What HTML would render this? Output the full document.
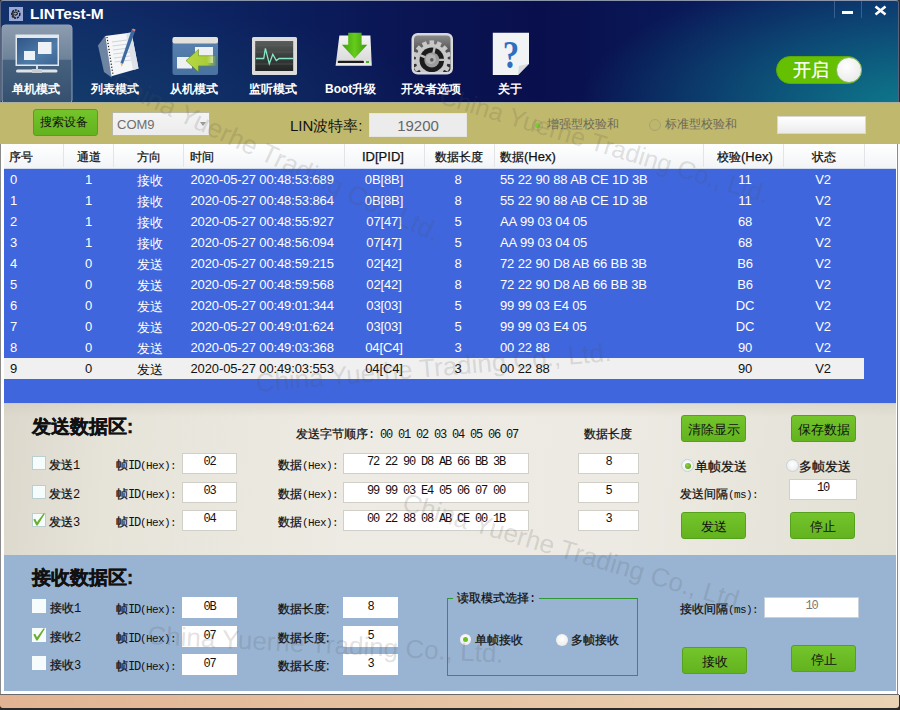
<!DOCTYPE html>
<html><head><meta charset="utf-8">
<style>
*{box-sizing:border-box;margin:0;padding:0}
html,body{width:900px;height:710px;overflow:hidden;background:#2a2a2a;font-family:"Liberation Sans",sans-serif}
.a{position:absolute;white-space:nowrap}
.c{width:80px;text-align:center}
#win{position:absolute;left:0;top:0;width:900px;height:710px;overflow:hidden}
#frame{position:absolute;left:0;top:140px;width:898px;height:555px;background:#fff;border-left:1px solid #8a8a8a;border-right:1px solid #8a8a8a}
#rw{position:absolute;left:898px;top:140px;width:2px;height:555px;background:#fafafa}
#tb{position:absolute;left:0;top:0;width:899px;height:102px;border:1px solid #56627c;border-top-color:#8a94aa;border-bottom:none;border-radius:3px 3px 0 0;
 background:radial-gradient(ellipse 320px 130px at 900px 102px,rgba(14,122,140,0.95),rgba(14,122,140,0) 100%),radial-gradient(ellipse 380px 100px at 60px 102px,rgba(22,72,110,0.55),rgba(22,72,110,0) 100%),linear-gradient(90deg,#12306a 0%,#0d2462 22%,#0a1554 45%,#090f4c 60%,#0a1a5a 78%,#0c2a68 100%);overflow:hidden}
.lbl{color:#fff;font-weight:bold;font-size:12px;top:80px}
#olive{position:absolute;left:0;top:102px;width:900px;height:42px;background:#c0b86c;box-shadow:inset 0 1px #aab0a0}
#hdr{position:absolute;left:4px;top:144px;width:892px;height:25px;background:linear-gradient(#fff,#f3f4f6);border-bottom:1px solid #d0daee}
#hdr .a{font-size:12px;color:#111;top:5px;-webkit-text-stroke:0.25px #111}
.sep{position:absolute;top:0;width:1px;height:23px;background:#e2e4e8}
#body{position:absolute;left:4px;top:169px;width:892px;height:234px;background:#3f66dc}
.row{position:absolute;left:0;width:860px;height:21px;color:#fff;font-size:13px;letter-spacing:-0.12px}
.row .a{top:3px}
.row.sel{background:#f0f0f0;color:#111}
#send{position:absolute;left:4px;top:403px;width:892px;height:152px;box-shadow:inset 0 1px #c4cce0;background:linear-gradient(rgba(200,195,180,0.35),rgba(200,195,180,0) 14px),linear-gradient(95deg,#dcd8cc 0%,#e6e3d9 12%,#eeebe4 40%,#eceae2 70%,#e2dfd4 100%)}
#recv{position:absolute;left:4px;top:555px;width:892px;height:136px;background:#99b4d3}
#foot{position:absolute;left:0;top:694px;width:899px;height:14px;background:linear-gradient(90deg,#e2b493,#e9d3b4);border-top:1px solid #6a6a6a;border-radius:0 0 3px 3px}
.btn{position:absolute;border:1px solid #55a01c;border-radius:3px;background:linear-gradient(#74c42c,#63b31f);color:#111;font-size:12px;text-align:center}
.tx{position:absolute;background:#fff;border:1px solid #d0d0c8;font-family:"Liberation Mono",monospace;font-size:12px;letter-spacing:-1.2px;text-align:center;color:#111;padding-top:1px}
.mono{font-family:"Liberation Mono",monospace;font-size:12px;letter-spacing:-1.2px;color:#111;-webkit-text-stroke:0}
.ms{font-family:"Liberation Mono",monospace;font-size:11px;letter-spacing:-0.6px;color:#111;-webkit-text-stroke:0}
.cb{position:absolute;width:14px;height:14px;background:#f6fcfc;border:1px solid #bccfd0}
.k{font-size:12px;color:#111;-webkit-text-stroke:0.25px #111}
.rad{position:absolute;width:13px;height:13px;border-radius:50%;background:radial-gradient(circle at 50% 40%,#fff,#e6e6e6);border:1px solid #c6c6c6}
</style></head><body>
<div id="win">
 <div id="frame"></div><div id="rw"></div>
 <div id="tb">
  <svg class="a" style="left:-1px;top:-1px" width="900" height="102" viewBox="0 0 900 102">
   <defs>
    <linearGradient id="selg" x1="0" y1="0" x2="0" y2="1">
     <stop offset="0" stop-color="#8e9db0"/><stop offset="0.44" stop-color="#6d8299"/><stop offset="0.45" stop-color="#46627f"/><stop offset="1" stop-color="#34506e"/>
    </linearGradient>
    <linearGradient id="scr" x1="0" y1="0" x2="1" y2="1">
     <stop offset="0" stop-color="#2f5688"/><stop offset="0.6" stop-color="#4f7ba8"/><stop offset="1" stop-color="#3a6494"/>
    </linearGradient>
    <linearGradient id="win2" x1="0" y1="0" x2="0" y2="1">
     <stop offset="0" stop-color="#5a82b0"/><stop offset="1" stop-color="#4a72a0"/>
    </linearGradient>
    <linearGradient id="arr" x1="0" y1="0" x2="1" y2="0">
     <stop offset="0" stop-color="#b8d840"/><stop offset="0.7" stop-color="#a8cc3a"/><stop offset="1" stop-color="#a8cc3a" stop-opacity="0.2"/>
    </linearGradient>
    <linearGradient id="scr2" x1="0" y1="0" x2="0" y2="1">
     <stop offset="0" stop-color="#5a5f5c"/><stop offset="0.5" stop-color="#3a3e3c"/><stop offset="1" stop-color="#222524"/>
    </linearGradient>
    <linearGradient id="gearbg" x1="0" y1="0" x2="0" y2="1">
     <stop offset="0" stop-color="#8a8a8a"/><stop offset="0.5" stop-color="#4a4a4a"/><stop offset="1" stop-color="#262626"/>
    </linearGradient>
    <linearGradient id="drv" x1="0" y1="0" x2="0" y2="1">
     <stop offset="0" stop-color="#f4f4f4"/><stop offset="0.8" stop-color="#dcdcdc"/><stop offset="1" stop-color="#f0f0f0"/>
    </linearGradient>
    <linearGradient id="grn" x1="0" y1="0" x2="1" y2="0">
     <stop offset="0" stop-color="#3ea010"/><stop offset="0.5" stop-color="#66cc1a"/><stop offset="1" stop-color="#3c9a0e"/>
    </linearGradient>
   </defs>
   <!-- selected tab -->
   <rect x="2" y="25" width="70" height="78" rx="3" fill="url(#selg)" stroke="#8fa2b8" stroke-width="1"/>
   <!-- monitor icon -->
   <rect x="15.5" y="34.5" width="43.5" height="31.5" fill="#e2e8ee" />
   <rect x="17" y="38" width="40.5" height="26.5" fill="url(#scr)"/>
   <rect x="24" y="51" width="11" height="9" fill="#eef2f6"/>
   <rect x="38" y="42" width="13.5" height="12" fill="#eef2f6"/>
   <rect x="36" y="66" width="2" height="4" fill="#d8dde2"/>
   <rect x="16" y="69.5" width="41.5" height="3" rx="1.5" fill="#dfe4e8"/>
   <rect x="32" y="69" width="10" height="4" fill="#c8ced4"/>
   <!-- notepad icon -->
   <polygon points="98,45.5 105,36 112,77.7 104,72" fill="#7e93ad" opacity="0.85"/>
   <polygon points="105.2,35.9 131.5,32.4 138.5,68.4 111.4,76.2" fill="#f4f6f8"/>
   <polygon points="131.5,32.4 138.5,68.4 133,70 126,33.2" fill="#dde2e8"/>
   <g stroke="#222" stroke-width="1.2" stroke-dasharray="1.2 1.8">
    <line x1="107" y1="37" x2="113" y2="75"/>
   </g>
   <g stroke="#c4ccd6" stroke-width="0.8">
    <line x1="112" y1="42" x2="127" y2="40"/><line x1="112.5" y1="46" x2="128" y2="44"/><line x1="113" y1="50" x2="129" y2="48"/>
    <line x1="113.5" y1="54" x2="130" y2="52"/><line x1="114" y1="58" x2="130" y2="56"/><line x1="114.5" y1="62" x2="131" y2="60"/>
   </g>
   <polygon points="131.5,30 135,31.5 123,64 120.5,63" fill="#3c6aa0"/>
   <polygon points="120.5,63 123,64 121.5,67" fill="#e8c070"/>
   <polygon points="131.5,30 135,31.5 135.5,29.5 133,28.5" fill="#d88080"/>
   <!-- slave icon -->
   <rect x="172.5" y="37" width="45.5" height="38" rx="2.5" fill="url(#win2)"/>
   <rect x="172.5" y="37" width="45.5" height="6.5" rx="2" fill="#e4e0da"/>
   <rect x="195" y="47" width="18" height="16" fill="#eef1f4"/>
   <rect x="177" y="57" width="15" height="11.5" fill="#eef1f4"/>
   <polygon points="186,60.6 198.5,49.4 198.5,55.7 216,55.7 216,65.9 198.5,65.9 198.5,72" fill="url(#arr)" stroke="#5c8a20" stroke-width="0.6"/>
   <!-- listen icon -->
   <rect x="252" y="37" width="45" height="38" rx="1.5" fill="#dcdcdc"/>
   <rect x="255.2" y="41" width="38" height="30" fill="url(#scr2)"/>
   <g stroke="#5c625e" stroke-width="0.6"><line x1="255" y1="45.5" x2="293" y2="45.5"/><line x1="255" y1="52" x2="293" y2="52"/><line x1="255" y1="64" x2="293" y2="64"/></g>
   <polyline points="255.9,58.5 263.7,58.5 265.4,48.3 269.3,63.8 272.8,54.3 276.3,60.6 279.2,58.5 293.2,58.5" fill="none" stroke="#86e8c8" stroke-width="1.3"/>
   <!-- boot icon -->
   <polygon points="339.4,35.6 370.4,35.6 371.8,65.8 335.6,65.8" fill="url(#drv)"/>
   <rect x="337.7" y="60.7" width="26.3" height="2.4" rx="1.2" fill="#1a1a1a"/>
   <rect x="366" y="61" width="3" height="2" fill="#4ab020"/>
   <polygon points="348.2,32.7 361.6,32.7 361.6,44.7 367.3,44.7 354.6,58.5 341.9,44.7 348.2,44.7" fill="url(#grn)"/>
   <!-- gear icon -->
   <rect x="411.5" y="33" width="41.5" height="41.5" rx="6" fill="#d6d8dc"/>
   <rect x="414" y="35.5" width="36.5" height="36.5" rx="4" fill="url(#gearbg)"/>
   <clipPath id="gclip"><rect x="414" y="35.5" width="36.5" height="36.5" rx="4"/></clipPath>
   <g clip-path="url(#gclip)"><g transform="translate(431.8,59.9)">
    <circle r="16" fill="#c8c8c8"/>
    <g fill="#c8c8c8"><rect x="-2.3" y="-19.5" width="4.6" height="6" transform="rotate(0)"/><rect x="-2.3" y="-19.5" width="4.6" height="6" transform="rotate(24)"/><rect x="-2.3" y="-19.5" width="4.6" height="6" transform="rotate(48)"/><rect x="-2.3" y="-19.5" width="4.6" height="6" transform="rotate(72)"/><rect x="-2.3" y="-19.5" width="4.6" height="6" transform="rotate(96)"/><rect x="-2.3" y="-19.5" width="4.6" height="6" transform="rotate(120)"/><rect x="-2.3" y="-19.5" width="4.6" height="6" transform="rotate(144)"/><rect x="-2.3" y="-19.5" width="4.6" height="6" transform="rotate(168)"/><rect x="-2.3" y="-19.5" width="4.6" height="6" transform="rotate(192)"/><rect x="-2.3" y="-19.5" width="4.6" height="6" transform="rotate(216)"/><rect x="-2.3" y="-19.5" width="4.6" height="6" transform="rotate(240)"/><rect x="-2.3" y="-19.5" width="4.6" height="6" transform="rotate(264)"/><rect x="-2.3" y="-19.5" width="4.6" height="6" transform="rotate(288)"/><rect x="-2.3" y="-19.5" width="4.6" height="6" transform="rotate(312)"/><rect x="-2.3" y="-19.5" width="4.6" height="6" transform="rotate(336)"/></g>
    <circle r="12.3" fill="#1c1c1c"/>
    <g stroke="#bcbcbc" stroke-width="2.4"><line x1="0" y1="0" x2="3" y2="-13"/><line x1="0" y1="0" x2="-12.5" y2="-5"/><line x1="0" y1="0" x2="12.5" y2="0"/></g>
    <circle r="7.5" fill="#9c9c9c"/>
    <circle cx="-1" cy="-1" r="5" fill="#b4b4b4"/>
    <circle r="1.8" fill="#5a5a5a"/>
   </g></g>
   <!-- about icon -->
   <polygon points="492.8,32.8 529,32.8 529,63.8 518,75 492.8,75" fill="#f2f3f5"/>
   <polygon points="529,63.8 518,75 519,66" fill="#d8dadc"/>
   <text x="511" y="68" font-family="Liberation Serif" font-size="40" font-weight="bold" fill="#2f6fc0" text-anchor="middle" transform="translate(511,0) scale(0.82,1) translate(-511,0)">?</text>
  </svg>
  <svg class="a" style="left:8px;top:6px" width="14" height="14" viewBox="0 0 15 15"><rect width="15" height="15" fill="#98a8d8"/><circle cx="7.3" cy="7.6" r="4.3" fill="none" stroke="#1a1a22" stroke-width="1.6" stroke-dasharray="2.2 0.9"/><path d="M5.2 6.2q2-1.8 3.6 0q0.8 1.6-1.2 2.4q-1.4 0.4-1.6-0.8" fill="none" stroke="#1a1a22" stroke-width="1.1"/><path d="M4 5L4.5 10.5L7 11.8" fill="none" stroke="#333" stroke-width="1.8"/></svg>
  
  <div class="a" style="left:29px;top:4px;color:#fff;font-weight:bold;font-size:15.5px">LINTest-M</div>
  <div class="a" style="left:833px;top:0px;width:1px;height:17px;background:#3a5f8c"></div>
  <div class="a" style="left:860px;top:0px;width:1px;height:17px;background:#3a5f8c"></div>
  <div class="a" style="left:841px;top:10px;width:11px;height:3px;background:#fff"></div>
  <svg class="a" style="left:873px;top:4px" width="13" height="11"><path d="M1.5 1.5L11.5 9.5M11.5 1.5L1.5 9.5" stroke="#fff" stroke-width="2.6"/></svg>
  <div class="a lbl" style="left:11px">单机模式</div>
  <div class="a lbl" style="left:90px">列表模式</div>
  <div class="a lbl" style="left:169px">从机模式</div>
  <div class="a lbl" style="left:248px">监听模式</div>
  <div class="a lbl" style="left:324px">Boot升级</div>
  <div class="a lbl" style="left:400px">开发者选项</div>
  <div class="a lbl" style="left:497px">关于</div>
  <div class="a" style="left:775px;top:55px;width:86px;height:28px;border-radius:14px;background:#64c000;border:1px solid #5aa80a"></div>
  <div class="a" style="left:792px;top:57px;color:#fff;font-size:18px;-webkit-text-stroke:0.3px #fff">开启</div>
  <div class="a" style="left:835px;top:56px;width:26px;height:26px;border-radius:13px;background:radial-gradient(circle at 40% 35%,#fff,#e4e4e4);border:1px solid #8ab868"></div>
 </div>
 <div id="olive">
  <div class="btn" style="left:33px;top:7px;width:65px;height:27px;line-height:25px;font-size:12px;text-indent:-4px">搜索设备</div>
  <div class="a" style="left:112px;top:10px;width:98px;height:24px;background:linear-gradient(#f4f4f4,#ececec);border:1px solid #b8b8a4;color:#6e6e6e;font-size:13px;padding:4px 0 0 4px">COM9</div>
  <div class="a" style="left:200px;top:20px;width:0;height:0;border-left:3px solid transparent;border-right:3px solid transparent;border-top:4px solid #999"></div>
  <div class="a" style="left:290px;top:15px;font-size:15px;color:#111">LIN波特率:</div>
  <div class="a" style="left:369px;top:11px;width:98px;height:24px;background:#ececec;border:1px solid #e4e4e0;color:#666;font-size:15px;text-align:center;padding-top:3px">19200</div>
  <div class="rad" style="left:532px;top:18px;width:11px;height:11px;background:#bdb66e;border-color:#aca56a"></div>
  <div class="a" style="left:535px;top:21px;width:5px;height:5px;border-radius:50%;background:#7ccc2a"></div>
  <div class="a" style="left:547px;top:14px;font-size:12px;color:#6a6a5a">增强型校验和</div>
  <div class="rad" style="left:649px;top:17px;width:12px;height:12px;background:#bdb66e;border-color:#aaa46c"></div>
  <div class="a" style="left:665px;top:14px;font-size:12px;color:#6a6a5a">标准型校验和</div>
  <div class="a" style="left:777px;top:14px;width:89px;height:18px;background:linear-gradient(#fff,#ebebeb);border:1px solid #d8d8d0"></div>
 </div>
 <div id="hdr">
  <div class="sep" style="left:59px"></div>
  <div class="sep" style="left:109px"></div>
  <div class="sep" style="left:179px"></div>
  <div class="sep" style="left:340px"></div>
  <div class="sep" style="left:420px"></div>
  <div class="sep" style="left:490px"></div>
  <div class="sep" style="left:699px"></div>
  <div class="sep" style="left:779px"></div>
  <div class="sep" style="left:860px"></div>
  <div class="a" style="left:5px">序号</div>
  <div class="a" style="left:73px">通道</div>
  <div class="a" style="left:133px">方向</div>
  <div class="a" style="left:186px">时间</div>
  <div class="a" style="left:358px;font-size:13px">ID[PID]</div>
  <div class="a" style="left:431px">数据长度</div>
  <div class="a" style="left:496px">数据<span style="font-size:13px">(Hex)</span></div>
  <div class="a" style="left:713px">校验<span style="font-size:13px">(Hex)</span></div>
  <div class="a" style="left:808px">状态</div>
 </div>
 <div id="body">
  <div class="row" style="top:0px"><span class="a" style="left:6px">0</span><span class="a c" style="left:44.5px">1</span><span class="a" style="left:133px">接收</span><span class="a" style="left:186.5px">2020-05-27 00:48:53:689</span><span class="a c" style="left:340px">0B[8B]</span><span class="a c" style="left:414px">8</span><span class="a" style="left:496px">55 22 90 88 AB CE 1D 3B</span><span class="a c" style="left:701px">11</span><span class="a c" style="left:779px">V2</span></div>
  <div class="row" style="top:21px"><span class="a" style="left:6px">1</span><span class="a c" style="left:44.5px">1</span><span class="a" style="left:133px">接收</span><span class="a" style="left:186.5px">2020-05-27 00:48:53:864</span><span class="a c" style="left:340px">0B[8B]</span><span class="a c" style="left:414px">8</span><span class="a" style="left:496px">55 22 90 88 AB CE 1D 3B</span><span class="a c" style="left:701px">11</span><span class="a c" style="left:779px">V2</span></div>
  <div class="row" style="top:42px"><span class="a" style="left:6px">2</span><span class="a c" style="left:44.5px">1</span><span class="a" style="left:133px">接收</span><span class="a" style="left:186.5px">2020-05-27 00:48:55:927</span><span class="a c" style="left:340px">07[47]</span><span class="a c" style="left:414px">5</span><span class="a" style="left:496px">AA 99 03 04 05</span><span class="a c" style="left:701px">68</span><span class="a c" style="left:779px">V2</span></div>
  <div class="row" style="top:63px"><span class="a" style="left:6px">3</span><span class="a c" style="left:44.5px">1</span><span class="a" style="left:133px">接收</span><span class="a" style="left:186.5px">2020-05-27 00:48:56:094</span><span class="a c" style="left:340px">07[47]</span><span class="a c" style="left:414px">5</span><span class="a" style="left:496px">AA 99 03 04 05</span><span class="a c" style="left:701px">68</span><span class="a c" style="left:779px">V2</span></div>
  <div class="row" style="top:84px"><span class="a" style="left:6px">4</span><span class="a c" style="left:44.5px">0</span><span class="a" style="left:133px">发送</span><span class="a" style="left:186.5px">2020-05-27 00:48:59:215</span><span class="a c" style="left:340px">02[42]</span><span class="a c" style="left:414px">8</span><span class="a" style="left:496px">72 22 90 D8 AB 66 BB 3B</span><span class="a c" style="left:701px">B6</span><span class="a c" style="left:779px">V2</span></div>
  <div class="row" style="top:105px"><span class="a" style="left:6px">5</span><span class="a c" style="left:44.5px">0</span><span class="a" style="left:133px">发送</span><span class="a" style="left:186.5px">2020-05-27 00:48:59:568</span><span class="a c" style="left:340px">02[42]</span><span class="a c" style="left:414px">8</span><span class="a" style="left:496px">72 22 90 D8 AB 66 BB 3B</span><span class="a c" style="left:701px">B6</span><span class="a c" style="left:779px">V2</span></div>
  <div class="row" style="top:126px"><span class="a" style="left:6px">6</span><span class="a c" style="left:44.5px">0</span><span class="a" style="left:133px">发送</span><span class="a" style="left:186.5px">2020-05-27 00:49:01:344</span><span class="a c" style="left:340px">03[03]</span><span class="a c" style="left:414px">5</span><span class="a" style="left:496px">99 99 03 E4 05</span><span class="a c" style="left:701px">DC</span><span class="a c" style="left:779px">V2</span></div>
  <div class="row" style="top:147px"><span class="a" style="left:6px">7</span><span class="a c" style="left:44.5px">0</span><span class="a" style="left:133px">发送</span><span class="a" style="left:186.5px">2020-05-27 00:49:01:624</span><span class="a c" style="left:340px">03[03]</span><span class="a c" style="left:414px">5</span><span class="a" style="left:496px">99 99 03 E4 05</span><span class="a c" style="left:701px">DC</span><span class="a c" style="left:779px">V2</span></div>
  <div class="row" style="top:168px"><span class="a" style="left:6px">8</span><span class="a c" style="left:44.5px">0</span><span class="a" style="left:133px">发送</span><span class="a" style="left:186.5px">2020-05-27 00:49:03:368</span><span class="a c" style="left:340px">04[C4]</span><span class="a c" style="left:414px">3</span><span class="a" style="left:496px">00 22 88</span><span class="a c" style="left:701px">90</span><span class="a c" style="left:779px">V2</span></div>
  <div class="row sel" style="top:189px"><span class="a" style="left:6px">9</span><span class="a c" style="left:44.5px">0</span><span class="a" style="left:133px">发送</span><span class="a" style="left:186.5px">2020-05-27 00:49:03:553</span><span class="a c" style="left:340px">04[C4]</span><span class="a c" style="left:414px">3</span><span class="a" style="left:496px">00 22 88</span><span class="a c" style="left:701px">90</span><span class="a c" style="left:779px">V2</span></div> </div>
 <div id="send">
  <div class="a" style="left:28px;top:11px;font-size:18.5px;font-weight:bold;color:#111;-webkit-text-stroke:0.4px #111">发送数据区:</div>
  <div class="a k" style="left:292px;top:23px">发送字节顺序<span class="mono">: 00 01 02 03 04 05 06 07</span></div>
  <div class="a k" style="left:580px;top:23px">数据长度</div>
  <div class="cb" style="left:28px;top:53px"></div>
  <div class="a k" style="left:45px;top:54px">发送<span class="mono">1</span></div>
  <div class="a k" style="left:112px;top:54px">帧<span class="mono">ID</span><span class="ms">(Hex):</span></div>
  <div class="tx" style="left:178px;top:50px;width:55px;height:21px">02</div>
  <div class="a k" style="left:274px;top:54px">数据<span class="ms">(Hex):</span></div>
  <div class="tx" style="left:339px;top:50px;width:186px;height:21px">72 22 90 D8 AB 66 BB 3B</div>
  <div class="tx" style="left:574px;top:50px;width:61px;height:21px">8</div>
  <div class="cb" style="left:28px;top:82px"></div>
  <div class="a k" style="left:45px;top:83px">发送<span class="mono">2</span></div>
  <div class="a k" style="left:112px;top:83px">帧<span class="mono">ID</span><span class="ms">(Hex):</span></div>
  <div class="tx" style="left:178px;top:79px;width:55px;height:21px">03</div>
  <div class="a k" style="left:274px;top:83px">数据<span class="ms">(Hex):</span></div>
  <div class="tx" style="left:339px;top:79px;width:186px;height:21px">99 99 03 E4 05 06 07 00</div>
  <div class="tx" style="left:574px;top:79px;width:61px;height:21px">5</div>
  <div class="cb" style="left:28px;top:110px"></div>
  <svg class="a" style="left:28px;top:110px" width="14" height="14" viewBox="0 0 14 14"><path d="M1.3 6.6L3.2 5.8L5 9.2L11.6 0.3L12.9 0.8L5.6 12.4L4.3 12.4Z" fill="#6aae2c"/></svg>
  <div class="a k" style="left:45px;top:111px">发送<span class="mono">3</span></div>
  <div class="a k" style="left:112px;top:111px">帧<span class="mono">ID</span><span class="ms">(Hex):</span></div>
  <div class="tx" style="left:178px;top:107px;width:55px;height:21px">04</div>
  <div class="a k" style="left:274px;top:111px">数据<span class="ms">(Hex):</span></div>
  <div class="tx" style="left:339px;top:107px;width:186px;height:21px">00 22 88 08 AB CE 00 1B</div>
  <div class="tx" style="left:574px;top:107px;width:61px;height:21px">3</div>
  <div class="btn" style="left:677px;top:12px;width:65px;height:27px;line-height:28px;font-size:13px">清除显示</div>
  <div class="btn" style="left:787px;top:12px;width:65px;height:27px;line-height:28px;font-size:13px">保存数据</div>
  <div class="rad" style="left:677px;top:56px;border-color:#c4d4dc"></div>
  <div class="a" style="left:681px;top:60px;width:6px;height:6px;border-radius:50%;background:radial-gradient(circle at 40% 35%,#8fd040,#4e9a10)"></div>
  <div class="a k" style="left:691px;top:55px;font-size:13px">单帧发送</div>
  <div class="rad" style="left:782px;top:56px;border-color:#c4d4dc"></div>
  <div class="a k" style="left:795px;top:55px;font-size:13px">多帧发送</div>
  <div class="a k" style="left:676px;top:83px">发送间隔<span class="ms">(ms):</span></div>
  <div class="tx" style="left:785px;top:76px;width:68px;height:21px">10</div>
  <div class="btn" style="left:677px;top:109px;width:65px;height:27px;line-height:28px;font-size:13px">发送</div>
  <div class="btn" style="left:786px;top:109px;width:65px;height:27px;line-height:28px;font-size:13px">停止</div>
 </div>
 <div id="recv">
  <div class="a" style="left:28px;top:10px;font-size:18.5px;font-weight:bold;color:#111;-webkit-text-stroke:0.4px #111">接收数据区:</div>
  <div class="cb" style="left:28px;top:44px;border:none"></div>
  <div class="a k" style="left:46px;top:45px">接收<span class="mono">1</span></div>
  <div class="a k" style="left:112px;top:46px">帧<span class="mono">ID</span><span class="ms">(Hex):</span></div>
  <div class="tx" style="left:178px;top:42px;width:55px;height:21px;border:none;padding-top:3px">0B</div>
  <div class="a k" style="left:274px;top:46px">数据长度:</div>
  <div class="tx" style="left:339px;top:42px;width:55px;height:21px;border:none;padding-top:3px">8</div>
  <div class="cb" style="left:28px;top:73px;border:none"></div>
  <svg class="a" style="left:28px;top:73px" width="14" height="14" viewBox="0 0 14 14"><path d="M1.3 6.6L3.2 5.8L5 9.2L11.6 0.3L12.9 0.8L5.6 12.4L4.3 12.4Z" fill="#6aae2c"/></svg>
  <div class="a k" style="left:46px;top:74px">接收<span class="mono">2</span></div>
  <div class="a k" style="left:112px;top:75px">帧<span class="mono">ID</span><span class="ms">(Hex):</span></div>
  <div class="tx" style="left:178px;top:71px;width:55px;height:21px;border:none;padding-top:3px">07</div>
  <div class="a k" style="left:274px;top:75px">数据长度:</div>
  <div class="tx" style="left:339px;top:71px;width:55px;height:21px;border:none;padding-top:3px">5</div>
  <div class="cb" style="left:28px;top:101px;border:none"></div>
  <div class="a k" style="left:46px;top:102px">接收<span class="mono">3</span></div>
  <div class="a k" style="left:112px;top:103px">帧<span class="mono">ID</span><span class="ms">(Hex):</span></div>
  <div class="tx" style="left:178px;top:99px;width:55px;height:21px;border:none;padding-top:3px">07</div>
  <div class="a k" style="left:274px;top:103px">数据长度:</div>
  <div class="tx" style="left:339px;top:99px;width:55px;height:21px;border:none;padding-top:3px">3</div>
  <div class="a" style="left:443px;top:43px;width:191px;height:78px;border:1px solid #2f9a34"></div>
  <div class="a k" style="left:449px;top:35px;background:#99b4d3;padding:0 4px">读取模式选择<span class="mono">:</span></div>
  <div class="rad" style="left:456px;top:79px;width:11px;height:11px;border:none"></div>
  <div class="a" style="left:459px;top:82px;width:5px;height:5px;border-radius:50%;background:#6cbf22"></div>
  <div class="a k" style="left:471px;top:77px">单帧接收</div>
  <div class="rad" style="left:552px;top:79px;width:12px;height:12px;border:none"></div>
  <div class="a k" style="left:567px;top:77px">多帧接收</div>
  <div class="a k" style="left:676px;top:46px">接收间隔<span class="ms">(ms):</span></div>
  <div class="tx" style="left:760px;top:42px;width:95px;height:21px;border-color:#c8d0d8;color:#777">10</div>
  <div class="btn" style="left:678px;top:92px;width:65px;height:27px;line-height:28px;font-size:13px">接收</div>
  <div class="btn" style="left:787px;top:90px;width:65px;height:27px;line-height:28px;font-size:13px">停止</div>
 </div>
 <div id="foot"></div>
 <svg class="a" style="left:0;top:0" width="900" height="710" viewBox="0 0 900 710">
  <g font-family="Liberation Sans" fill="#505050" fill-opacity="0.18">
   <text font-size="26.3" transform="translate(109,88) rotate(25.3)">China Yuerhe Trading Co., Ltd.</text>
   <text font-size="25" transform="translate(438,103) rotate(17)">China Yuerhe Trading Co., Ltd.</text>
   <text font-size="26" transform="translate(401,510) rotate(16.5)">China Yuerhe Trading Co., Ltd.</text>
   <text font-size="26" transform="translate(147,644) rotate(3)">China Yuerhe Trading Co., Ltd.</text>
   <text font-size="26" transform="translate(256.7,392) rotate(-5)">China Yuerhe Trading Co., Ltd.</text>
  </g>
 </svg>

</div>
</body></html>
